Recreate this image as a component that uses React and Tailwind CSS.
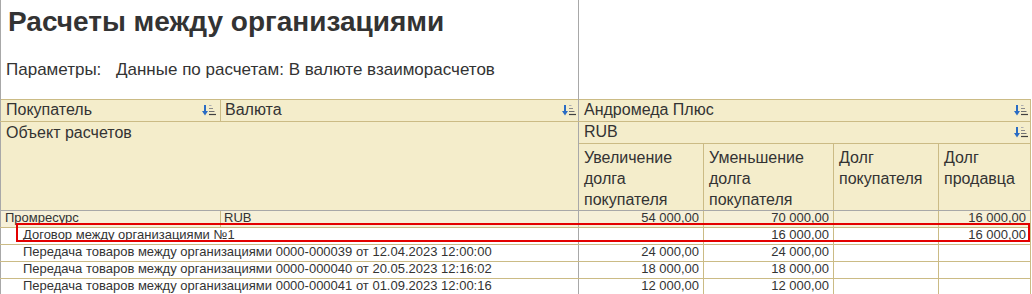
import React from 'react';

const font = { fontFamily: '"Liberation Sans", Arial, sans-serif' };

function SortIcon() {
  return (
    <svg width="14" height="13" viewBox="0 0 14 13" className="shrink-0">
      <path d="M3 1v7" stroke="#2a6cc4" strokeWidth="2" />
      <path d="M0 7h6l-3 4.5z" fill="#2a6cc4" />
      <path d="M7 1.5h2.5" stroke="#b0b0b0" strokeWidth="1" />
      <path d="M7 4.5h4" stroke="#8a8a8a" strokeWidth="1" />
      <path d="M7 7.5h5.5" stroke="#707070" strokeWidth="1" />
      <path d="M7 10.5h7" stroke="#404040" strokeWidth="1.2" />
    </svg>
  );
}

const rows = [
  { name: 'Договор между организациями №1', inc: '', dec: '16 000,00', buyer: '', seller: '16 000,00' },
  { name: 'Передача товаров между организациями 0000-000039 от 12.04.2023 12:00:00', inc: '24 000,00', dec: '24 000,00', buyer: '', seller: '' },
  { name: 'Передача товаров между организациями 0000-000040 от 20.05.2023 12:16:02', inc: '18 000,00', dec: '18 000,00', buyer: '', seller: '' },
  { name: 'Передача товаров между организациями 0000-000041 от 01.09.2023 12:00:16', inc: '12 000,00', dec: '12 000,00', buyer: '', seller: '' },
];

export default function App() {
  const hb = 'border border-[#cbbb85]';
  const num = 'border-r border-b border-[#cbbb85] text-right align-top pr-[4px] whitespace-nowrap p-0';
  return (
    <div className="relative w-[1032px] h-[294px] overflow-hidden bg-white text-[#333]" style={font}>
      <table className="table-fixed border-collapse w-[1031px]">
        <colgroup>
          <col className="w-[220px]" />
          <col className="w-[358px]" />
          <col className="w-[125px]" />
          <col className="w-[130px]" />
          <col className="w-[105px]" />
          <col className="w-[92px]" />
        </colgroup>
        <tbody>
          <tr className="h-[99px]">
            <td colSpan={2} className="border-l border-r border-[#a8a8a8] align-top p-0">
              <div className="pl-[7px] pt-[5px] text-[28px] font-bold leading-[34px] text-[#333]">Расчеты между организациями</div>
              <div className="flex pl-[5px] pt-[22px] text-[17px] leading-[18px]">
                <span className="w-[110px]">Параметры:</span>
                <span>Данные по расчетам: В валюте взаиморасчетов</span>
              </div>
            </td>
            <td colSpan={4} className="p-0" />
          </tr>
          <tr className="h-[22px] bg-[#f4edcb] text-[16px] leading-[20px]">
            <td className={`${hb} border-l-[#a8a8a8] p-0`}>
              <div className="flex items-center justify-between pl-[5px] pr-[4px]">
                <span>Покупатель</span>
                <SortIcon />
              </div>
            </td>
            <td className={`${hb} border-r-[#a8a8a8] p-0`}>
              <div className="flex items-center justify-between pl-[4px] pr-[2px]">
                <span>Валюта</span>
                <SortIcon />
              </div>
            </td>
            <td colSpan={4} className={`${hb} border-l-[#a8a8a8] p-0`}>
              <div className="flex items-center justify-between pl-[5px] pr-[2px]">
                <span>Андромеда Плюс</span>
                <SortIcon />
              </div>
            </td>
          </tr>
          <tr className="h-[22px] bg-[#f4edcb] text-[16px] leading-[20px]">
            <td colSpan={2} rowSpan={2} className="border border-[#cbbb85] border-l-[#a8a8a8] border-r-[#a8a8a8] border-b-[#a8a8a8] align-top p-0 pl-[5px] pt-[1px]">
              Объект расчетов
            </td>
            <td colSpan={4} className={`${hb} p-0`}>
              <div className="flex items-center justify-between pl-[5px] pr-[2px]">
                <span>RUB</span>
                <SortIcon />
              </div>
            </td>
          </tr>
          <tr className="h-[64px] bg-[#f4edcb] text-[16px] leading-[21px]">
            <td className={`${hb} border-b-[#a8a8a8] align-top p-0 pl-[5px] pt-[3px]`}>Увеличение<br />долга<br />покупателя</td>
            <td className={`${hb} border-b-[#a8a8a8] align-top p-0 pl-[5px] pt-[3px]`}>Уменьшение<br />долга<br />покупателя</td>
            <td className={`${hb} border-b-[#a8a8a8] align-top p-0 pl-[5px] pt-[3px]`}>Долг<br />покупателя</td>
            <td className={`${hb} border-b-[#a8a8a8] align-top p-0 pl-[5px] pt-[3px]`}>Долг<br />продавца</td>
          </tr>
          <tr className="h-[17px] bg-[#f6f0d8] text-[13px] leading-[14px]">
            <td className="border-l border-l-[#a8a8a8] border-r border-b border-[#cbbb85] align-top p-0 pl-[4px] whitespace-nowrap">Промресурс</td>
            <td className="border-r border-r-[#a8a8a8] border-b border-b-[#cbbb85] align-top p-0 pl-[3px]">RUB</td>
            <td className={num}>54 000,00</td>
            <td className={num}>70 000,00</td>
            <td className={num}></td>
            <td className={num}>16 000,00</td>
          </tr>
          {rows.map((r, i) => (
            <tr key={i} className="h-[17px] text-[13px] leading-[14px]">
              <td colSpan={2} className="border-l border-l-[#a8a8a8] border-r border-r-[#a8a8a8] border-b border-b-[#cbbb85] align-top p-0 pl-[22px] whitespace-nowrap overflow-hidden">
                {r.name}
              </td>
              <td className={num}>{r.inc}</td>
              <td className={num}>{r.dec}</td>
              <td className={num}>{r.buyer}</td>
              <td className={num}>{r.seller}</td>
            </tr>
          ))}
        </tbody>
      </table>
      {/* выделение строки договора */}
      <div className="absolute left-[16px] top-[223px] w-[1014px] h-[19px] border-2 border-[#e30000] pointer-events-none" />
    </div>
  );
}
